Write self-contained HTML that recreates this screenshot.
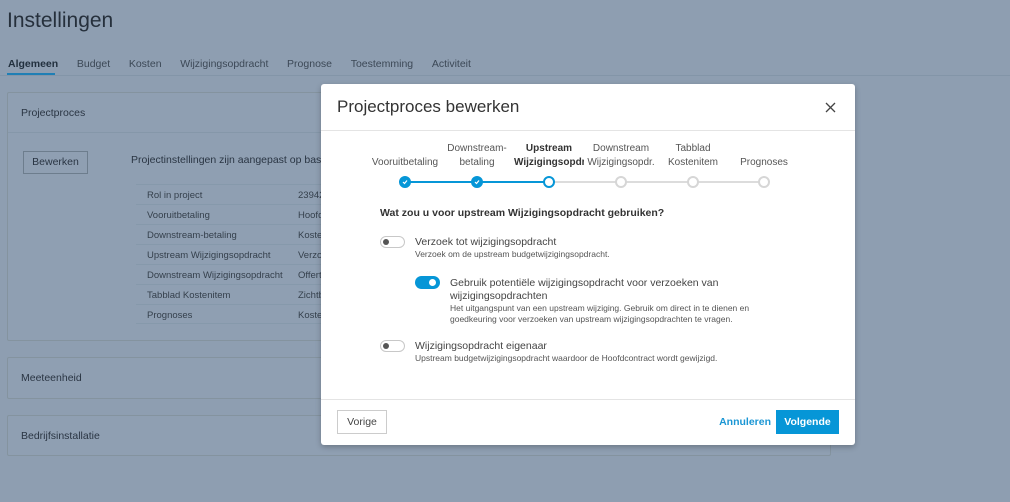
<!DOCTYPE html>
<html><head><style>
*{margin:0;padding:0;box-sizing:border-box}
body{width:1010px;height:502px;background:#8e9eb1;font-family:"Liberation Sans",sans-serif;position:relative;overflow:hidden;color:#2a3543}
.a{position:absolute;white-space:nowrap}
.card{position:absolute;left:7px;width:824px;border:1px solid #84939f;border-radius:2px;background:#8f9fb2}
.row{position:absolute;left:128px;width:200px;height:20px;border-top:1px solid #8699ab;font-size:9.5px;color:#35404c}
.tg{position:absolute;width:25px;height:12px;border:1px solid #c8c8c8;border-radius:6px;background:#fff}
.tg:after{content:"";position:absolute;left:2px;top:2px;width:6px;height:6px;border-radius:50%;background:#555}
.dot{position:absolute;top:176px;width:12px;height:12px;border-radius:50%;border:2px solid #d6d6d6;background:#fff}
.lab{position:absolute;width:70px;text-align:center;font-size:10px;color:#555;line-height:14px;overflow:hidden;white-space:nowrap}
</style></head><body>
<div class="a" style="left:7px;top:9px;font-size:21px;color:#26303c">Instellingen</div>
<div class="a" style="left:8px;top:58px;font-size:10.5px;color:#3c4856">
<span style="font-weight:bold;color:#22303e">Algemeen</span><span style="margin-left:18.7px">Budget</span><span style="margin-left:18.7px">Kosten</span><span style="margin-left:18.7px">Wijzigingsopdracht</span><span style="margin-left:18.7px">Prognose</span><span style="margin-left:18.7px">Toestemming</span><span style="margin-left:18.7px">Activiteit</span></div>
<div class="a" style="left:0;top:75px;width:1010px;height:1px;background:#8395a8"></div>
<div class="a" style="left:7px;top:73px;width:48px;height:2px;background:#1f7fb5"></div>

<div class="card" style="top:92px;height:249px">
<div class="a" style="left:13px;top:14px;font-size:10.5px">Projectproces</div>
<div class="a" style="left:0;top:39px;width:822px;height:1px;background:#8597a9"></div>
<div class="a" style="left:15px;top:58px;width:65px;height:23px;border:1px solid #6d7d8d;font-size:10.5px;text-align:center;line-height:21px">Bewerken</div>
<div class="a" style="left:123px;top:61px;font-size:10.5px">Projectinstellingen zijn aangepast op basis</div>
<div class="row" style="top:91px"><span class="a" style="left:11px;top:5px">Rol in project</span><span class="a" style="left:162px;top:5px">239423</span></div>
<div class="row" style="top:111px"><span class="a" style="left:11px;top:5px">Vooruitbetaling</span><span class="a" style="left:162px;top:5px">Hoofdco</span></div>
<div class="row" style="top:131px"><span class="a" style="left:11px;top:5px">Downstream-betaling</span><span class="a" style="left:162px;top:5px">Kosten</span></div>
<div class="row" style="top:151px"><span class="a" style="left:11px;top:5px">Upstream Wijzigingsopdracht</span><span class="a" style="left:162px;top:5px">Verzoek</span></div>
<div class="row" style="top:171px"><span class="a" style="left:11px;top:5px">Downstream Wijzigingsopdracht</span><span class="a" style="left:162px;top:5px">Offertea</span></div>
<div class="row" style="top:191px"><span class="a" style="left:11px;top:5px">Tabblad Kostenitem</span><span class="a" style="left:162px;top:5px">Zichtba</span></div>
<div class="row" style="top:211px;border-bottom:1px solid #8699ab"><span class="a" style="left:11px;top:5px">Prognoses</span><span class="a" style="left:162px;top:5px">Kosten</span></div>
</div>
<div class="card" style="top:357px;height:42px"><div class="a" style="left:13px;top:14px;font-size:10.5px">Meeteenheid</div></div>
<div class="card" style="top:415px;height:41px"><div class="a" style="left:13px;top:14px;font-size:10.5px">Bedrijfsinstallatie</div></div>

<div class="a" style="left:321px;top:84px;width:534px;height:361px;background:#fff;border-radius:3px;box-shadow:0 2px 6px rgba(0,0,0,.25)">
<div class="a" style="left:16px;top:13px;font-size:17px;color:#333">Projectproces bewerken</div>
<svg class="a" style="left:504px;top:18px" width="11" height="11" viewBox="0 0 11 11"><path d="M1 1L10 10M10 1L1 10" stroke="#444" stroke-width="1.3"/></svg>
<div class="a" style="left:0;top:46px;width:534px;height:1px;background:#e4e4e4"></div>
</div>
<div class="a" style="left:405px;top:181px;width:144px;height:2px;background:#0696d7"></div>
<div class="a" style="left:549px;top:181px;width:215px;height:2px;background:#dcdcdc"></div>
<div class="lab" style="left:370px;top:156px">Vooruitbetaling</div>
<div class="lab" style="left:442px;top:142px">Downstream-<br>betaling</div>
<div class="lab" style="left:514px;top:142px;font-weight:bold;color:#333">Upstream<br>Wijzigingsopdr</div>
<div class="lab" style="left:586px;top:142px">Downstream<br>Wijzigingsopdr.</div>
<div class="lab" style="left:658px;top:142px">Tabblad<br>Kostenitem</div>
<div class="lab" style="left:729px;top:156px">Prognoses</div>
<div class="dot" style="left:399px;background:#0696d7;border-color:#0696d7"><svg class="a" style="left:1px;top:1px" width="6" height="6" viewBox="0 0 6 6"><path d="M1 3L2.5 4.5L5 1.5" stroke="#fff" stroke-width="1.2" fill="none"/></svg></div>
<div class="dot" style="left:471px;background:#0696d7;border-color:#0696d7"><svg class="a" style="left:1px;top:1px" width="6" height="6" viewBox="0 0 6 6"><path d="M1 3L2.5 4.5L5 1.5" stroke="#fff" stroke-width="1.2" fill="none"/></svg></div>
<div class="dot" style="left:543px;border-color:#0696d7"></div>
<div class="dot" style="left:615px"></div>
<div class="dot" style="left:687px"></div>
<div class="dot" style="left:758px"></div>

<div class="a" style="left:380px;top:207px;font-size:10.5px;font-weight:bold;color:#333">Wat zou u voor upstream Wijzigingsopdracht gebruiken?</div>
<div class="tg" style="left:380px;top:236px"></div>
<div class="a" style="left:415px;top:236px;font-size:10.5px;color:#444">Verzoek tot wijzigingsopdracht</div>
<div class="a" style="left:415px;top:249px;font-size:8.5px;color:#555">Verzoek om de upstream budgetwijzigingsopdracht.</div>
<div class="a" style="left:415px;top:276px;width:25px;height:13px;border-radius:7px;background:#0696d7"><div class="a" style="left:14px;top:3px;width:7px;height:7px;border-radius:50%;background:#fff"></div></div>
<div class="a" style="left:450px;top:277px;font-size:10.5px;color:#444;line-height:13px">Gebruik potentiële wijzigingsopdracht voor verzoeken van<br>wijzigingsopdrachten</div>
<div class="a" style="left:450px;top:303px;font-size:8.5px;color:#555;line-height:11px">Het uitgangspunt van een upstream wijziging. Gebruik om direct in te dienen en<br>goedkeuring voor verzoeken van upstream wijzigingsopdrachten te vragen.</div>
<div class="tg" style="left:380px;top:340px"></div>
<div class="a" style="left:415px;top:340px;font-size:10.5px;color:#444">Wijzigingsopdracht eigenaar</div>
<div class="a" style="left:415px;top:353px;font-size:8.5px;color:#555">Upstream budgetwijzigingsopdracht waardoor de Hoofdcontract wordt gewijzigd.</div>

<div class="a" style="left:321px;top:399px;width:534px;height:1px;background:#e4e4e4"></div>
<div class="a" style="left:337px;top:410px;width:50px;height:24px;border:1px solid #ccc;font-size:10.5px;color:#444;text-align:center;line-height:22px">Vorige</div>
<div class="a" style="left:671px;width:100px;text-align:right;top:416px;font-size:10.5px;font-weight:bold;color:#1a96d4">Annuleren</div>
<div class="a" style="left:776px;top:410px;width:63px;height:24px;background:#0696d7;font-size:10.5px;font-weight:bold;color:#fff;text-align:center;line-height:24px">Volgende</div>
</body></html>
